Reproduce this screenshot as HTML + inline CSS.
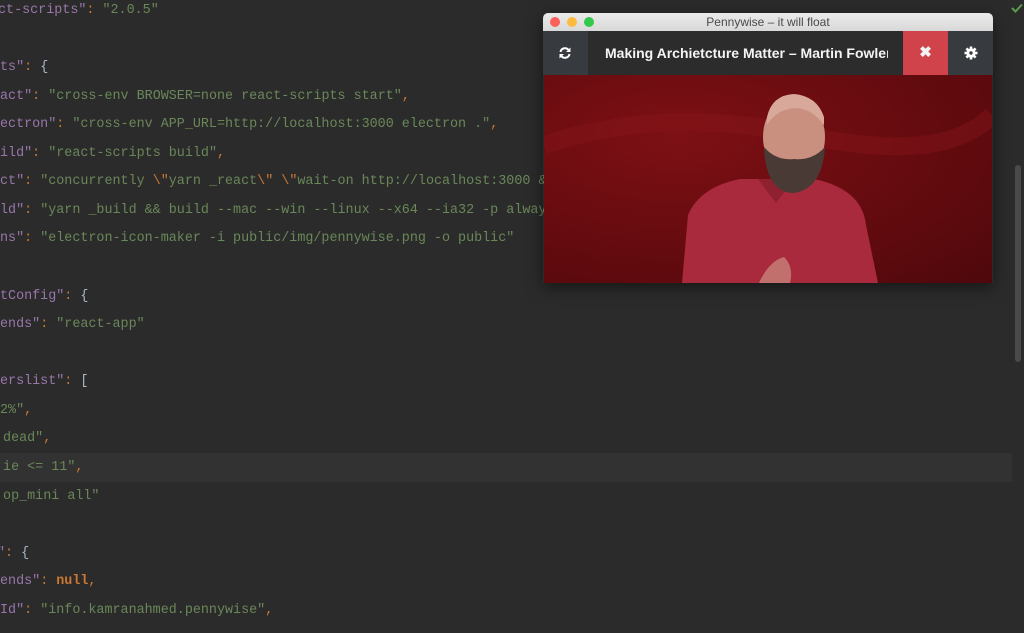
<!DOCTYPE html>
<html><head><meta charset="utf-8"><style>
html,body{margin:0;padding:0;width:1024px;height:633px;overflow:hidden;background:#2b2b2b}
.code{position:absolute;left:0;top:0;font-family:"Liberation Mono",monospace;font-size:13.4px;white-space:pre;color:#a9b7c6}
.l{position:absolute;height:29px;line-height:29px}
.k{color:#9876aa}.s{color:#6a8759}.p{color:#cc7832}.n{color:#cc7832;font-weight:bold}
.hl{position:absolute;left:0;top:453px;width:1012px;height:29px;background:#323232}
.sb{position:absolute;left:1015px;top:165px;width:6px;height:197px;border-radius:3px;background:#4a4a4a}
.win{position:absolute;left:543px;top:13px;width:450px;height:270px;box-shadow:0 4px 16px rgba(0,0,0,.5);border-radius:5px 5px 0 0;overflow:hidden}
.tb{height:18px;background:linear-gradient(#ebebeb,#d9d9d9);font:12px "Liberation Sans",sans-serif;color:#4a4a4a;text-align:center;line-height:18px;position:relative}
.dot{position:absolute;top:4px;width:10px;height:10px;border-radius:50%}
.bar{height:44px;background:#2c2c2c;position:relative;font:bold 14px "Liberation Sans",sans-serif;color:#f4f4f4}
.vid{position:absolute;top:62px;left:1px;width:448px;height:208px;background:radial-gradient(ellipse at 30% 30%,#7d1014,#5e0a0e 70%,#4e080b);overflow:hidden}
</style></head><body>
<div class="hl"></div>
<div class="code">
<div class="l" style="top:-4px;left:-2px"><span class="k">ct-scripts"</span><span class="p">: </span><span class="s">"2.0.5"</span></div>
<div class="l" style="top:53px;left:0"><span class="k">ts"</span><span class="p">: </span>{</div>
<div class="l" style="top:82px;left:0"><span class="k">act"</span><span class="p">: </span><span class="s">"cross-env BROWSER=none react-scripts start"</span><span class="p">,</span></div>
<div class="l" style="top:110px;left:0"><span class="k">ectron"</span><span class="p">: </span><span class="s">"cross-env APP_URL=http://localhost:3000 electron ."</span><span class="p">,</span></div>
<div class="l" style="top:139px;left:0"><span class="k">ild"</span><span class="p">: </span><span class="s">"react-scripts build"</span><span class="p">,</span></div>
<div class="l" style="top:167px;left:0"><span class="k">ct"</span><span class="p">: </span><span class="s">"concurrently </span><span class="p">\"</span><span class="s">yarn _react</span><span class="p">\"</span><span class="s"> </span><span class="p">\"</span><span class="s">wait-on http://localhost:3000 &amp;&amp; electron .</span></div>
<div class="l" style="top:196px;left:0"><span class="k">ld"</span><span class="p">: </span><span class="s">"yarn _build &amp;&amp; build --mac --win --linux --x64 --ia32 -p always"</span></div>
<div class="l" style="top:224px;left:0"><span class="k">ns"</span><span class="p">: </span><span class="s">"electron-icon-maker -i public/img/pennywise.png -o public"</span></div>
<div class="l" style="top:282px;left:0"><span class="k">tConfig"</span><span class="p">: </span>{</div>
<div class="l" style="top:310px;left:0"><span class="k">ends"</span><span class="p">: </span><span class="s">"react-app"</span></div>
<div class="l" style="top:367px;left:0"><span class="k">erslist"</span><span class="p">: </span>[</div>
<div class="l" style="top:396px;left:0"><span class="s">2%"</span><span class="p">,</span></div>
<div class="l" style="top:424px;left:-5px"><span class="s"> dead"</span><span class="p">,</span></div>
<div class="l" style="top:453px;left:-5px"><span class="s"> ie &lt;= 11"</span><span class="p">,</span></div>
<div class="l" style="top:482px;left:-5px"><span class="s"> op_mini all"</span></div>
<div class="l" style="top:539px;left:-3px"><span class="k">"</span><span class="p">: </span>{</div>
<div class="l" style="top:567px;left:0"><span class="k">ends"</span><span class="p">: </span><span class="n">null</span><span class="p">,</span></div>
<div class="l" style="top:596px;left:0"><span class="k">Id"</span><span class="p">: </span><span class="s">"info.kamranahmed.pennywise"</span><span class="p">,</span></div>
</div>
<div class="sb"></div>
<svg style="position:absolute;left:1011px;top:3px" width="12" height="10"><path d="M1 5 L4.5 8.5 L11 1.5" stroke="#5a9e4a" stroke-width="2" fill="none"/></svg>
<div class="win">
 <div class="tb">Pennywise – it will float
  <div class="dot" style="left:7px;background:#fc605b"></div>
  <div class="dot" style="left:24px;background:#fdbc40"></div>
  <div class="dot" style="left:41px;background:#34c84a"></div>
 </div>
 <div class="bar">
  <div style="position:absolute;left:0;top:0;width:45px;height:44px;background:#373b3f"></div>
  <svg style="position:absolute;left:15px;top:15px" width="14" height="14" viewBox="0 0 14 14"><path d="M2.5 6 A4.6 4.6 0 0 1 11 4.5 M11.5 8 A4.6 4.6 0 0 1 3 9.5" stroke="#fff" stroke-width="2" fill="none"/><path d="M12.5 1.5 V6 H8z M1.5 12.5 V8 H6z" fill="#fff"/></svg>
  <div style="position:absolute;left:62px;top:0;line-height:44px;width:283px;overflow:hidden;white-space:nowrap">Making Archietcture Matter – Martin Fowler</div>
  <div style="position:absolute;left:360px;top:0;width:45px;height:44px;background:#d0434a;text-align:center;line-height:44px;font-size:15px">✖</div>
  <div style="position:absolute;left:405px;top:0;width:45px;height:44px;background:#373b3f"></div>
  <svg style="position:absolute;left:421px;top:15px" width="14" height="14" viewBox="0 0 14 14"><g fill="#fff"><circle cx="7" cy="7" r="4.6"/><rect x="5.7" y="0.5" width="2.6" height="13"/><rect x="0.5" y="5.7" width="13" height="2.6"/><rect x="5.7" y="0.5" width="2.6" height="13" transform="rotate(45 7 7)"/><rect x="5.7" y="0.5" width="2.6" height="13" transform="rotate(-45 7 7)"/></g><circle cx="7" cy="7" r="1.7" fill="#373b3f"/></svg>
 </div>
 <div class="vid">
  <svg width="448" height="208" viewBox="0 0 448 208">
   <path d="M0 70 Q120 30 260 60 T448 40" stroke="#8a161b" stroke-width="18" fill="none" opacity=".4"/>
   <path d="M138 208 L144 140 Q156 112 196 104 L270 104 Q318 114 322 150 L334 208Z" fill="#a82a3c"/>
   <path d="M214 104 L232 128 L250 104Z" fill="#8e2030"/>
   <ellipse cx="250" cy="62" rx="31" ry="40" fill="#c99080"/>
   <path d="M220 72 Q222 118 250 118 Q278 114 281 72 Q268 86 250 84 Q232 86 220 72Z" fill="#4a3a36"/>
   <path d="M223 42 Q228 20 250 19 Q273 21 280 42 L280 50 Q268 33 250 33 Q232 35 223 50Z" fill="#d8a89a"/>
   <path d="M92 208 Q100 190 120 190 Q130 200 128 208Z" fill="#d4a090" opacity=".0"/>
   <path d="M215 208 Q225 186 240 182 Q250 192 246 208Z" fill="#d4a090" opacity=".6"/>
  </svg>
 </div>
</div>
</body></html>
